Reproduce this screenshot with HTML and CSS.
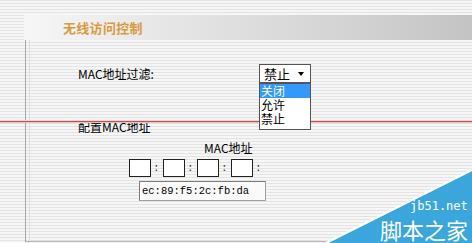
FILE: index.html
```html
<!DOCTYPE html>
<html lang="zh">
<head>
<meta charset="utf-8">
<link rel="stylesheet" href="styles.css">
</head>
<body>
<div class="page">
  <div class="header-bar"><span class="title">无线访问控制</span></div>
  <div class="content">
    <div class="inner">
      <div class="filter-row">
        <span class="label">MAC地址过滤:</span>
        <div class="select">
          <span class="select-value">禁止</span>
          <span class="arrow"></span>
          <ul class="options">
            <li class="option active">关闭</li>
            <li class="option">允许</li>
            <li class="option">禁止</li>
          </ul>
        </div>
      </div>
      <div class="section-title">配置MAC地址</div>
      <div class="mac-head">MAC地址</div>
      <div class="boxes">
        <span class="box"></span><span class="colon">:</span>
        <span class="box"></span><span class="colon">:</span>
        <span class="box"></span><span class="colon">:</span>
        <span class="box"></span><span class="colon">:</span>
      </div>
      <div class="field">ec:89:f5:2c:fb:da</div>
    </div>
  </div>
  <div class="red-line"></div>
  <div class="watermark">
    <svg class="wm-shape" width="150" height="72" viewBox="0 0 150 72">
      <polygon points="150,0 150,72 6,72" fill="#3ba6dc"/>
      <line x1="150" y1="-1" x2="4" y2="72" stroke="#ffffff" stroke-width="2"/>
    </svg>
    <span class="wm-url">jb51.net</span>
    <span class="wm-name">脚本之家</span>
  </div>
</div>
</body>
</html>
```

FILE: styles.css
```css
* { box-sizing: border-box; }
html, body { margin: 0; padding: 0; }
body {
  width: 472px;
  height: 243px;
  overflow: hidden;
  font-family: "Noto Sans CJK SC", "Liberation Sans", sans-serif;
  font-size: 12px;
  color: #000;
  background: repeating-linear-gradient(to bottom, #e3e3e3 0px, #e3e3e3 1px, #f6f6f6 1px, #f6f6f6 3px);
}
.page {
  position: relative;
  width: 472px;
  height: 243px;
  padding-top: 15px;
}
.header-bar {
  margin-left: 24px;
  height: 25px;
  background: linear-gradient(to right, #f7f7f7 0%, #f2f2f2 8%, #e2e2e2 40%, #d4d4d4 70%, #c3c3c3 100%);
  display: flex;
  align-items: center;
  padding-left: 39px;
}
.title {
  color: #d99a3e;
  font-size: 13px;
  font-weight: bold;
  line-height: 13px;
  letter-spacing: 0.3px;
}
.content {
  margin-left: 25px;
  height: 202px;
  border-left: 1px solid #a8a8a8;
  border-bottom: 1px solid #b4b4b4;
}
.inner {
  margin-left: 3px;
  height: 100%;
  border-left: 1px solid #dedede;
  padding-top: 24px;
}
.filter-row {
  display: flex;
  align-items: center;
  height: 19px;
  padding-left: 48px;
}
.label {
  width: 181px;
  line-height: 19px;
}
.select {
  position: relative;
  width: 52px;
  height: 19px;
  background: #fff;
  border: 1px solid #555;
  display: flex;
  align-items: center;
  padding-left: 4px;
  font-size: 13px;
}
.select-value { line-height: 17px; }
.arrow {
  position: absolute;
  right: 6px;
  top: 7px;
  width: 0;
  height: 0;
  border-left: 3px solid transparent;
  border-right: 3px solid transparent;
  border-top: 4px solid #000;
}
.options {
  position: absolute;
  left: -1px;
  top: 18px;
  width: 52px;
  height: 47px;
  margin: 0;
  padding: 0;
  list-style: none;
  background: #fff;
  border: 1px solid #555;
  z-index: 3;
}
.option {
  height: 14px;
  line-height: 14px;
  padding-left: 1px;
  font-size: 12px;
}
.option.active {
  background: #3399ff;
  color: #fff;
}
.section-title {
  margin-top: 37px;
  padding-left: 48px;
  line-height: 14px;
  height: 14px;
}
.mac-head {
  margin-top: 7px;
  padding-left: 174px;
  line-height: 14px;
  height: 14px;
}
.boxes {
  margin-top: 4px;
  padding-left: 99px;
  display: flex;
  align-items: center;
  height: 18px;
}
.box {
  width: 22px;
  height: 18px;
  background: #fff;
  border: 1px solid #222;
}
.colon {
  width: 12px;
  padding-left: 2px;
  font-family: "Liberation Mono", monospace;
  font-size: 11px;
  color: #333;
}
.field {
  margin-top: 4px;
  margin-left: 109px;
  width: 127px;
  height: 20px;
  background: #fafafa;
  border: 1px solid #a0a0a0;
  border-top-color: #7c7c7c;
  border-left-color: #7c7c7c;
  font-family: "Liberation Mono", monospace;
  font-size: 10.5px;
  line-height: 18px;
  padding-left: 2px;
  white-space: nowrap;
  overflow: hidden;
}
.red-line {
  position: absolute;
  left: 0;
  top: 121px;
  width: 472px;
  height: 1px;
  background: #c85050;
  box-shadow: 0 1px 0 #ecc0c0, 0 -1px 0 #f2d4d4;
  z-index: 2;
}
.watermark {
  position: absolute;
  right: 0;
  bottom: 0;
  width: 150px;
  height: 72px;
  z-index: 4;
}
.wm-shape {
  position: absolute;
  left: 0;
  top: 0;
  display: block;
}
.wm-url {
  position: absolute;
  left: 88px;
  top: 29px;
  color: #fff;
  font-family: "DejaVu Sans Mono", monospace;
  font-size: 12px;
  line-height: 12px;
}
.wm-name {
  position: absolute;
  left: 58px;
  top: 46px;
  color: #fff;
  font-family: "Noto Sans CJK SC", sans-serif;
  font-size: 22px;
  line-height: 24px;
  white-space: nowrap;
}
```
